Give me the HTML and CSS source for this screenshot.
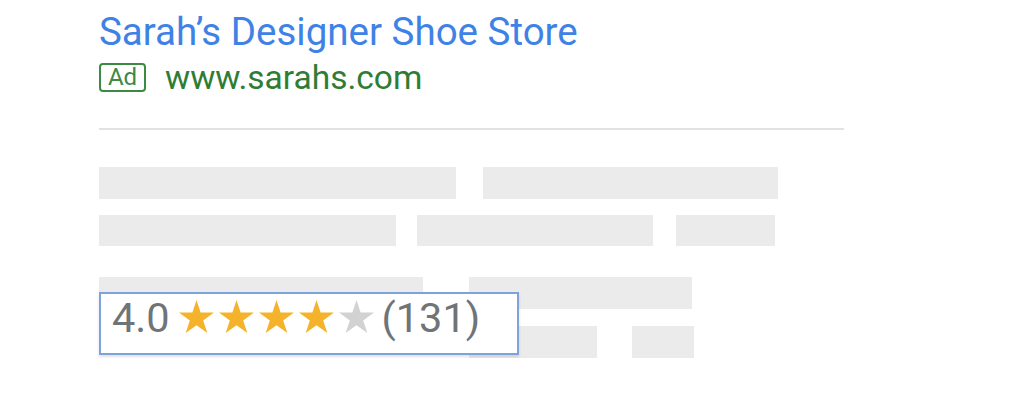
FILE: index.html
```html
<!DOCTYPE html>
<html>
<head>
<meta charset="utf-8">
<link rel="stylesheet" href="styles.css">
</head>
<body>
<div class="page">
  <div class="title">Sarah’s Designer Shoe Store</div>
  <div class="urlrow">
    <span class="adbadge">Ad</span>
    <span class="url">www.sarahs.com</span>
  </div>
  <div class="divider"></div>
  <div class="lines">
    <div class="row row1">
      <div class="bar" style="width:357px"></div>
      <div class="bar" style="width:295px"></div>
    </div>
    <div class="row row2">
      <div class="bar" style="width:297px"></div>
      <div class="bar" style="width:236px"></div>
      <div class="bar" style="width:99px"></div>
    </div>
    <div class="row row3">
      <div class="bar" style="width:324px"></div>
      <div class="bar" style="width:223px"></div>
    </div>
    <div class="row row4">
      <div class="bar" style="width:128px"></div>
      <div class="bar" style="width:62px"></div>
    </div>
    <div class="rating">
      <span class="score">4.0</span>
      <span class="stars">
        <svg class="star on" viewBox="0 0 35 33"><path d="M17.5 0l4.12 12.6h13.38l-10.8 7.8 4.12 12.6-10.82-7.8-10.82 7.8 4.12-12.6L0 12.6h13.38z"/></svg>
        <svg class="star on" viewBox="0 0 35 33"><path d="M17.5 0l4.12 12.6h13.38l-10.8 7.8 4.12 12.6-10.82-7.8-10.82 7.8 4.12-12.6L0 12.6h13.38z"/></svg>
        <svg class="star on" viewBox="0 0 35 33"><path d="M17.5 0l4.12 12.6h13.38l-10.8 7.8 4.12 12.6-10.82-7.8-10.82 7.8 4.12-12.6L0 12.6h13.38z"/></svg>
        <svg class="star on" viewBox="0 0 35 33"><path d="M17.5 0l4.12 12.6h13.38l-10.8 7.8 4.12 12.6-10.82-7.8-10.82 7.8 4.12-12.6L0 12.6h13.38z"/></svg>
        <svg class="star off" viewBox="0 0 35 33"><path d="M17.5 0l4.12 12.6h13.38l-10.8 7.8 4.12 12.6-10.82-7.8-10.82 7.8 4.12-12.6L0 12.6h13.38z"/></svg>
      </span>
      <span class="count">(131)</span>
    </div>
  </div>
</div>
</body>
</html>
```

FILE: styles.css
```css
html, body {
  margin: 0;
  padding: 0;
  background: #ffffff;
}
body {
  font-family: Roboto, "Liberation Sans", sans-serif;
}
.page {
  padding: 12px 0 0 99px;
  width: 745px;
}
.title {
  font-size: 38.5px;
  line-height: 40px;
  color: #3f82e6;
  white-space: nowrap;
}
.urlrow {
  display: flex;
  align-items: center;
  margin-top: 11px;
  height: 29px;
}
.adbadge {
  box-sizing: border-box;
  width: 47px;
  height: 29px;
  border: 2px solid #3c8a43;
  border-radius: 4px;
  color: #3c8a43;
  font-size: 24px;
  line-height: 25px;
  text-align: center;
}
.url {
  margin-left: 19px;
  font-size: 33.5px;
  line-height: 29px;
  color: #2f7d34;
  white-space: nowrap;
}
.divider {
  margin-top: 36px;
  height: 2px;
  background: #e2e2e2;
}
.lines {
  position: relative;
  margin-top: 37px;
}
.row {
  display: flex;
  height: 32px;
}
.bar {
  height: 100%;
  background: #ebebeb;
}
.row1 { gap: 27px; }
.row2 { gap: 21px; margin-top: 16px; height: 31px; }
.row2 .bar:nth-child(3) { margin-left: 2px; }
.row3 { gap: 46px; margin-top: 31px; }
.row4 { gap: 35px; margin-top: 17px; padding-left: 370px; }
.rating {
  position: absolute;
  left: 0;
  top: 125px;
  box-sizing: border-box;
  width: 420px;
  height: 63px;
  border: 2px solid #7ea3dc;
  background: #ffffff;
  box-shadow: 0 2px 3px rgba(0,0,0,0.12);
  display: flex;
  align-items: flex-start;
  padding: 3px 0 0 11px;
  color: #6f7479;
  font-size: 41.5px;
  line-height: 42px;
}
.score {
  margin-right: 9px;
}
.stars {
  display: flex;
  gap: 5px;
  margin: 3px 8px 0 0;
}
.star {
  width: 35px;
  height: 33px;
  display: block;
}
.star.on { fill: #f4b32b; }
.star.off { fill: #d2d2d2; }
```
